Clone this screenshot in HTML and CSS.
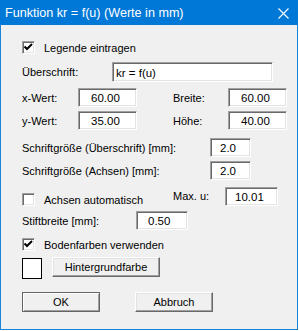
FILE: index.html
```html
<!DOCTYPE html>
<html lang="de">
<head>
    <meta charset="UTF-8">
    <title>Funktion kr = f(u)</title>
    <link rel="stylesheet" href="styles.css">
</head>
<body>
    <div class="dialog">
        <div class="titlebar">
            <span class="title">Funktion kr = f(u) (Werte in mm)</span>
            <svg class="close" width="11" height="11" viewBox="0 0 11 11">
                <path d="M0.5 0.5 L10.5 10.5 M10.5 0.5 L0.5 10.5" stroke="#fff" stroke-width="1.1" fill="none"/>
            </svg>
        </div>
        <div class="content">
            <div class="row row-legende">
                <span class="check on">
                    <svg width="11" height="11" viewBox="0 0 11 11"><path d="M1.5 4.5 L4 7 L9 2" stroke="#000" stroke-width="2" fill="none"/></svg>
                </span>
                <span class="check-label">Legende eintragen</span>
            </div>

            <div class="row row-title">
                <span class="label w-title">Überschrift:</span>
                <span class="field f-title">kr = f(u)</span>
            </div>

            <div class="row row-x">
                <span class="label w-xy">x-Wert:</span>
                <span class="field f-xy">60.00</span>
                <span class="label w-side">Breite:</span>
                <span class="field f-xy">60.00</span>
            </div>

            <div class="row row-y">
                <span class="label w-xy">y-Wert:</span>
                <span class="field f-xy">35.00</span>
                <span class="label w-side">Höhe:</span>
                <span class="field f-xy">40.00</span>
            </div>

            <div class="row row-font1">
                <span class="label w-font">Schriftgröße (Überschrift) [mm]:</span>
                <span class="field f-font">2.0</span>
            </div>

            <div class="row row-font2">
                <span class="label w-font">Schriftgröße (Achsen) [mm]:</span>
                <span class="field f-font">2.0</span>
            </div>

            <div class="row row-axes">
                <span class="auto">
                    <span class="check"></span>
                    <span class="check-label">Achsen automatisch</span>
                </span>
                <span class="label w-max">Max. u:</span>
                <span class="field f-max">10.01</span>
            </div>

            <div class="row row-pen">
                <span class="label w-pen">Stiftbreite [mm]:</span>
                <span class="field f-pen">0.50</span>
            </div>

            <div class="row row-boden">
                <span class="check on">
                    <svg width="11" height="11" viewBox="0 0 11 11"><path d="M1.5 4.5 L4 7 L9 2" stroke="#000" stroke-width="2" fill="none"/></svg>
                </span>
                <span class="check-label">Bodenfarben verwenden</span>
            </div>

            <div class="row row-color">
                <span class="swatch"></span>
                <button class="btn btn-color">Hintergrundfarbe</button>
            </div>

            <div class="row row-buttons">
                <button class="btn btn-default">OK</button>
                <button class="btn btn-cancel">Abbruch</button>
            </div>
        </div>
    </div>
</body>
</html>
```

FILE: styles.css
```css
body {
    margin: 0;
    padding: 0;
    background-color: #fff;
    font-family: "Liberation Sans", Arial, sans-serif;
    font-size: 11px;
    color: #000;
}
.dialog {
    width: 298px;
    height: 330px;
    box-sizing: border-box;
    border: 1px solid #1883d7;
    border-top: none;
    background-color: #f0f0f0;
}
.titlebar {
    height: 25px;
    background-color: #0078d7;
    display: flex;
    align-items: center;
    justify-content: space-between;
    padding: 0 9px 0 5px;
    margin: 0 -1px;
}
.title {
    color: #fff;
    font-size: 12.6px;
    padding-top: 1px;
}
.close {
    display: block;
    margin-top: 2px;
}
.content {
    display: flex;
    flex-direction: column;
    padding-left: 21px;
}
.row {
    display: flex;
    align-items: center;
}
.label {
    flex: none;
}
.check {
    width: 13px;
    height: 13px;
    box-sizing: border-box;
    background-color: #fff;
    border-top: 1px solid #a0a0a0;
    border-left: 1px solid #a0a0a0;
    border-right: 1px solid #fff;
    border-bottom: 1px solid #fff;
    box-shadow: inset 1px 1px #696969, inset -1px -1px #e3e3e3;
    flex: none;
}
.check svg {
    display: block;
    margin: 0;
}
.check-label {
    margin-left: 9px;
}
.field {
    height: 19px;
    box-sizing: border-box;
    background-color: #fff;
    border-top: 1px solid #a0a0a0;
    border-left: 1px solid #a0a0a0;
    border-right: 1px solid #fff;
    border-bottom: 1px solid #fff;
    box-shadow: inset 1px 1px #696969, inset -1px -1px #e3e3e3;
    display: flex;
    align-items: center;
    padding-top: 1px;
    flex: none;
    font-size: 11.5px;
}

/* row positions */
.row-legende { height: 13px; margin-top: 16px; }
.row-title { height: 20px; margin-top: 8px; }
.row-x { height: 19px; margin-top: 6px; }
.row-y { height: 19px; margin-top: 4px; }
.row-font1 { height: 19px; margin-top: 8px; }
.row-font2 { height: 19px; margin-top: 4px; }
.row-axes { height: 19px; margin-top: 7px; align-items: flex-start; }
.row-pen { height: 19px; margin-top: 5px; }
.row-boden { height: 13px; margin-top: 8px; }
.row-color { height: 21px; margin-top: 6px; align-items: flex-start; }
.row-buttons { height: 20px; margin-top: 14px; }

/* label and field widths */
.w-title { width: 90px; }
.f-title { width: 161px; height: 20px; padding-left: 3px; }
.w-xy { width: 56px; }
.f-xy { width: 59px; padding-left: 12px; }
.w-side { width: 55px; margin-left: 36px; }
.w-font { width: 188px; }
.f-font { width: 41px; padding-left: 9px; }
.auto {
    width: 151px;
    display: flex;
    align-items: center;
    margin-top: 6px;
    flex: none;
}
.w-max { width: 52px; margin-top: 3px; }
.f-max { width: 53px; padding-left: 9px; }
.w-pen { width: 114px; }
.f-pen { width: 52px; padding-left: 11px; }

.swatch {
    width: 20px;
    height: 21px;
    box-sizing: border-box;
    border: 1px solid #000;
    background-color: #fff;
    margin-top: 1px;
}
.btn {
    font-family: "Liberation Sans", Arial, sans-serif;
    font-size: 11px;
    color: #000;
    background-color: #f0f0f0;
    box-sizing: border-box;
    height: 20px;
    padding: 0;
    border-top: 1px solid #fff;
    border-left: 1px solid #fff;
    border-right: 1px solid #696969;
    border-bottom: 1px solid #696969;
    box-shadow: inset -1px -1px #a0a0a0, inset 1px 1px #e3e3e3;
    text-align: center;
}
.btn-color {
    width: 108px;
    margin-left: 10px;
}
.btn-default {
    width: 78px;
    border: 1px solid #646464;
    box-shadow: inset 1px 1px #fff, inset -1px -1px #a0a0a0;
}
.btn-cancel {
    width: 78px;
    margin-left: 35px;
}
```
